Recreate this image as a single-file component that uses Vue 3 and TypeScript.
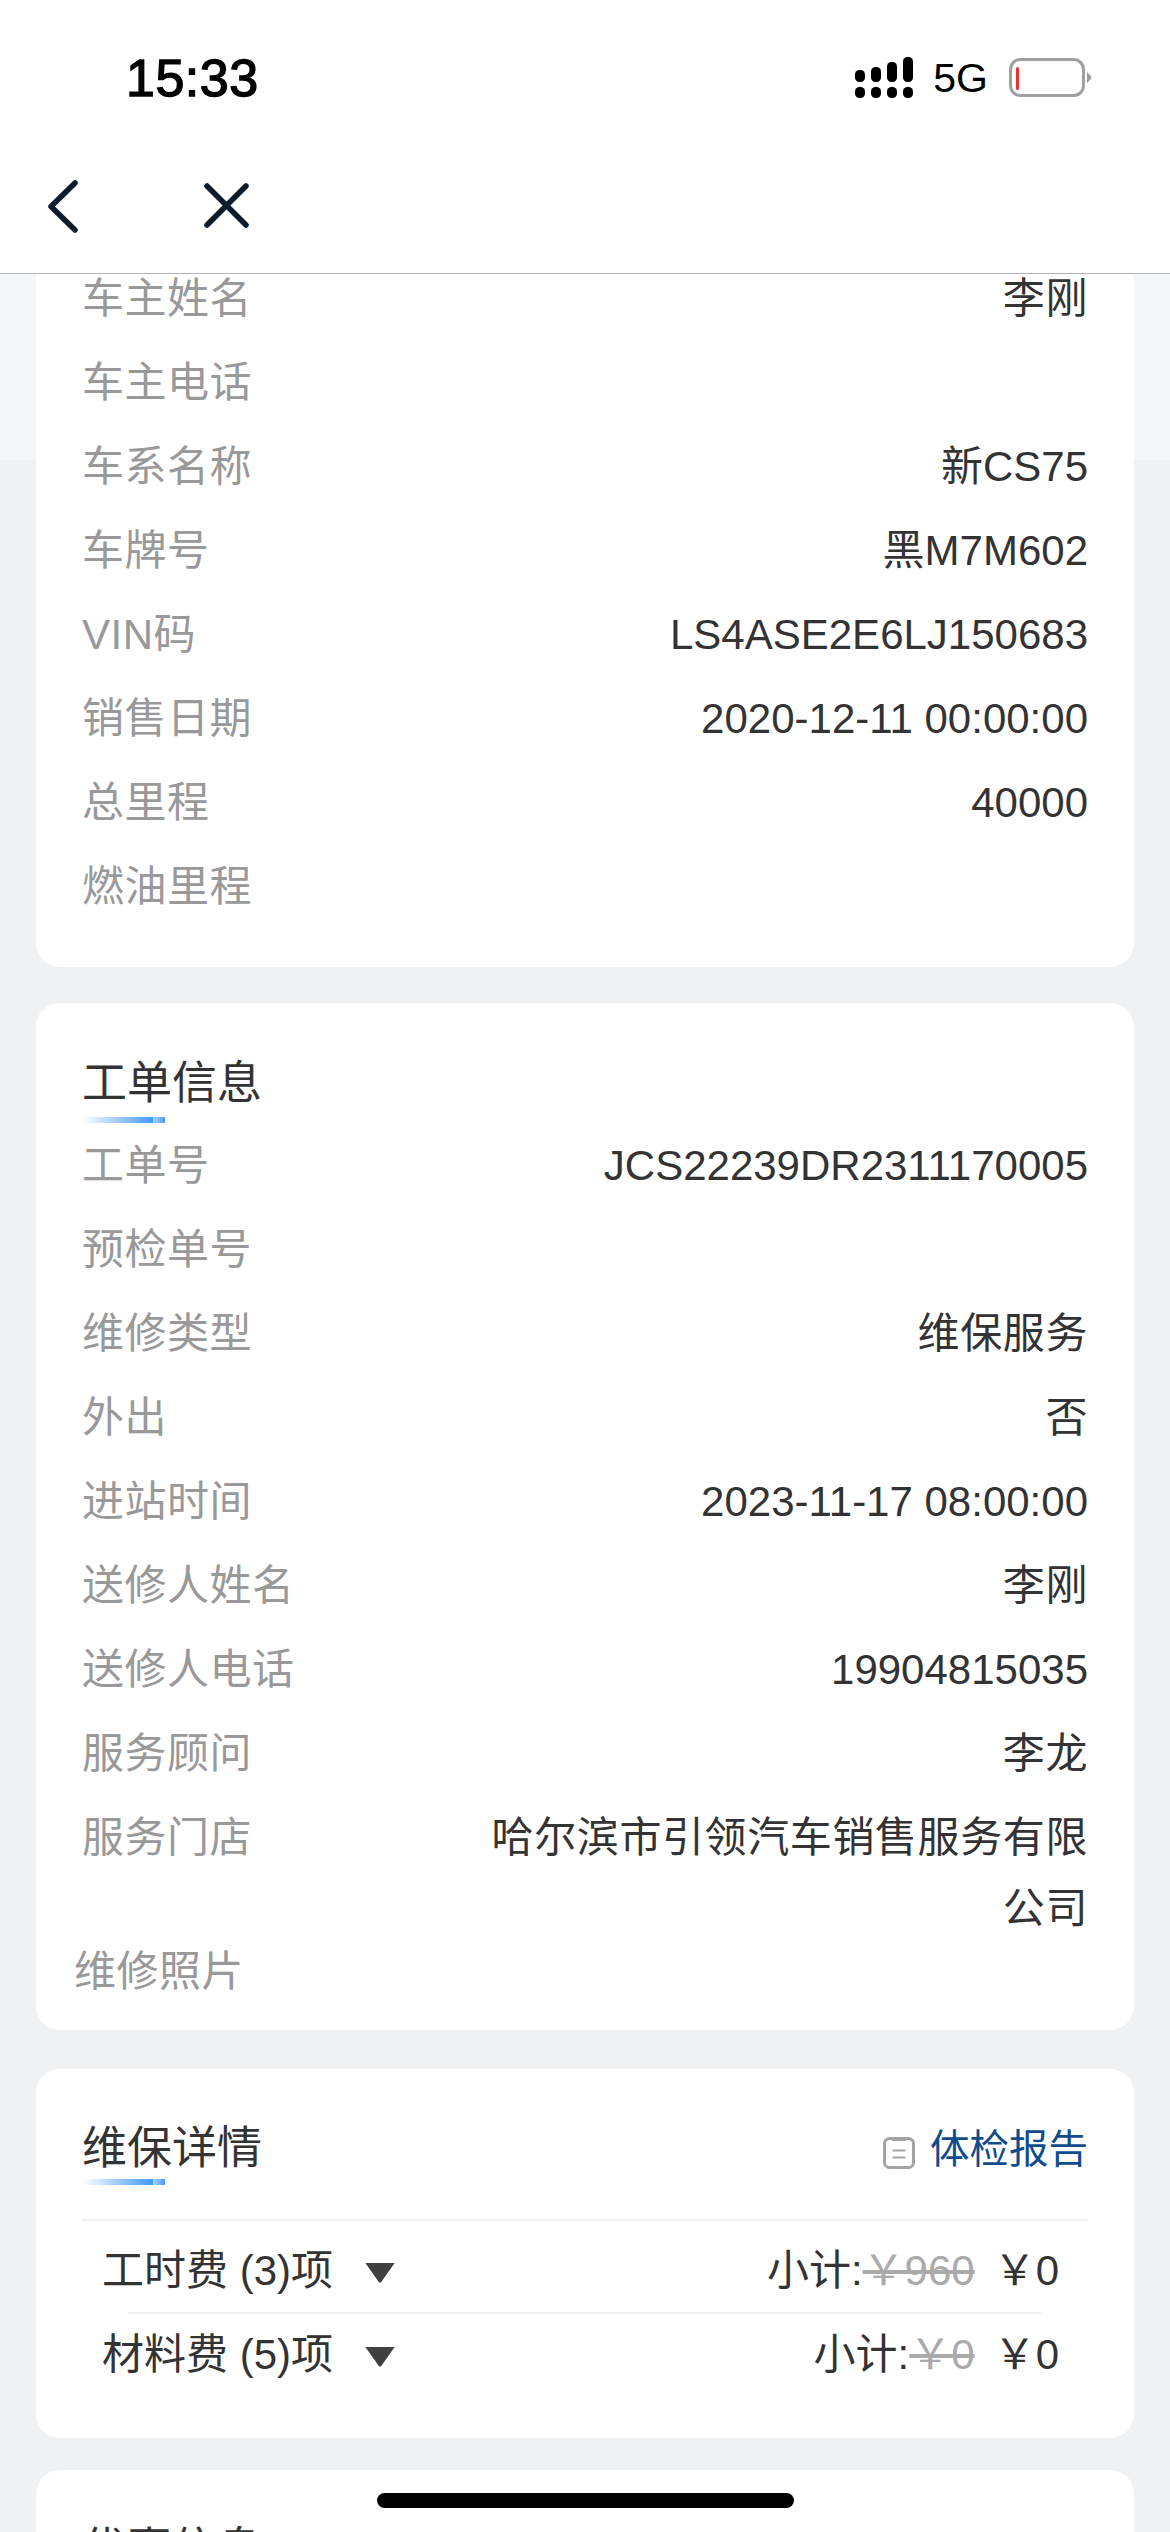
<script setup lang="ts">
interface Row { label: string; value?: string }

const ownerRows: Row[] = [
  { label: '车主姓名', value: '李刚' },
  { label: '车主电话' },
  { label: '车系名称', value: '新CS75' },
  { label: '车牌号', value: '黑M7M602' },
  { label: 'VIN码', value: 'LS4ASE2E6LJ150683' },
  { label: '销售日期', value: '2020-12-11 00:00:00' },
  { label: '总里程', value: '40000' },
  { label: '燃油里程' },
]

const orderRows: Row[] = [
  { label: '工单号', value: 'JCS22239DR2311170005' },
  { label: '预检单号' },
  { label: '维修类型', value: '维保服务' },
  { label: '外出', value: '否' },
  { label: '进站时间', value: '2023-11-17 08:00:00' },
  { label: '送修人姓名', value: '李刚' },
  { label: '送修人电话', value: '19904815035' },
  { label: '服务顾问', value: '李龙' },
  { label: '服务门店', value: '哈尔滨市引领汽车销售服务有限公司' },
]

const fees = [
  { name: '工时费 (3)项', original: '￥960', actual: '￥0' },
  { name: '材料费 (5)项', original: '￥0', actual: '￥0' },
]

const isCjk = (text?: string): boolean => !!text && !/[0-9A-Za-z]/.test(text)
</script>

<template>
  <div class="page">
    <header class="top">
      <div class="status">
        <span class="time">15:33</span>
        <div class="status-right">
          <svg class="signal" width="58" height="41" viewBox="0 0 58 41">
            <rect x="0" y="13" width="10" height="12" rx="4.5" />
            <rect x="16" y="10" width="10" height="15" rx="4.5" />
            <rect x="32" y="5" width="10" height="20" rx="4.5" />
            <rect x="48" y="0" width="10" height="25" rx="4.5" />
            <rect x="0" y="30" width="10" height="11" rx="4.5" />
            <rect x="16" y="30" width="10" height="11" rx="4.5" />
            <rect x="32" y="30" width="10" height="11" rx="4.5" />
            <rect x="48" y="30" width="10" height="11" rx="4.5" />
          </svg>
          <span class="net">5G</span>
          <svg class="battery" width="83" height="40" viewBox="0 0 83 40">
            <rect x="1.5" y="1.5" width="73" height="36" rx="10" fill="none" stroke="#a0a0a0" stroke-width="3" />
            <rect x="7" y="9" width="3" height="23" rx="1.5" fill="#f0302c" />
            <path d="M78 14 L82 18 Q82.6 19.5 82 21 L78 25 Z" fill="#a0a0a0" />
          </svg>
        </div>
      </div>
      <nav class="nav">
        <svg class="nav-icon" width="210" height="60" viewBox="0 0 210 60" fill="none" stroke="#0b1c2c" stroke-width="5.5" stroke-linecap="round" stroke-linejoin="round">
          <path d="M27 3 L3 26.5 L27 50" />
          <path d="M159 6 L198 45 M198 6 L159 45" />
        </svg>
      </nav>
    </header>

    <main class="content">
      <section class="card owner">
        <div v-for="row in ownerRows" :key="row.label" class="row">
          <span class="label">{{ row.label }}</span>
          <span class="value" :class="{ cjk: isCjk(row.value) }">{{ row.value }}</span>
        </div>
      </section>

      <section class="card order">
        <h2 class="title">工单信息</h2>
        <div v-for="row in orderRows" :key="row.label" class="row">
          <span class="label">{{ row.label }}</span>
          <span class="value" :class="{ cjk: isCjk(row.value) }">{{ row.value }}</span>
        </div>
        <div class="photos">维修照片</div>
      </section>

      <section class="card detail">
        <div class="detail-head">
          <h2 class="title">维保详情</h2>
          <div class="report">
            <svg width="34" height="34" viewBox="0 0 34 34" fill="none" stroke="#a3a3a3">
              <rect x="2.5" y="2.5" width="29" height="29" rx="5" stroke-width="3" />
              <path d="M10 3 H24" stroke-width="4" />
              <path d="M10.5 14.5 H23.5 M10.5 21.5 H23.5" stroke-width="2" />
            </svg>
            <span>体检报告</span>
          </div>
        </div>
        <div class="fees">
          <div v-for="fee in fees" :key="fee.name" class="fee">
            <div class="fee-name">
              <span>{{ fee.name }}</span>
              <i class="arrow"></i>
            </div>
            <div class="fee-sum">
              <span>小计:</span><s>{{ fee.original }}</s><span class="actual">{{ fee.actual }}</span>
            </div>
          </div>
        </div>
      </section>

      <section class="card last">
        <h2 class="title">优惠信息</h2>
      </section>
    </main>

    <div class="home"></div>
  </div>
</template>

<style scoped>
.page {
  position: relative;
  width: 1170px;
  height: 2532px;
  overflow: hidden;
  display: flex;
  flex-direction: column;
  font-family: "Liberation Sans", "Noto Sans CJK SC", sans-serif;
  font-size: 42px;
  color: #333;
  background: #fff;
}
.top {
  flex: none;
  background: #fff;
  border-bottom: 1px solid #b2b2b2;
  position: relative;
  z-index: 2;
}
.status {
  height: 140px;
  display: flex;
  align-items: center;
  justify-content: space-between;
  padding: 14px 78px 0 126px;
  box-sizing: border-box;
}
.time {
  font-size: 52px;
  font-weight: 400;
  letter-spacing: 0.5px;
  -webkit-text-stroke: 1.4px #000;
  color: #000;
  line-height: 1;
  margin-top: 1px;
}
.status-right {
  display: flex;
  align-items: center;
}
.signal { fill: #000; }
.net {
  font-size: 41px;
  color: #000;
  line-height: 1;
  margin: 3px 21px 0 20px;
}
.battery { margin-top: 2px; }
.nav {
  height: 133px;
  display: flex;
  padding: 40px 0 0 48px;
  box-sizing: border-box;
}
.nav-icon { display: block; }
.content {
  flex: 1;
  min-height: 0;
  overflow: hidden;
  padding: 0 36px;
  background: linear-gradient(#f5f6f8 186px, #f0f1f3 186px);
}
.card {
  background: #fff;
  border-radius: 24px;
  padding: 0 46px;
}
.owner {
  margin-top: -18px;
  padding-bottom: 39px;
  margin-bottom: 36px;
}
.order {
  padding-top: 59px;
  padding-bottom: 36px;
  margin-bottom: 39px;
}
.title {
  position: relative;
  margin: 0;
  font-size: 45px;
  font-weight: 400;
  line-height: 44px;
  color: #333;
}
.title::after {
  content: "";
  position: absolute;
  left: 0;
  top: 55px;
  width: 83px;
  height: 6px;
  background: linear-gradient(90deg, #fff 0, #409cff 85%, #a8d2ff 86%, #409cff 100%);
}
.order .title { margin-bottom: 5px; height: 56px; }
.row {
  display: flex;
  justify-content: space-between;
  padding: 6.5px 0;
  line-height: 71px;
}
.label {
  flex: none;
  color: #999;
  letter-spacing: 0.5px;
}
.value {
  width: 600px;
  text-align: right;
  color: #333;
  min-height: 71px;
}
.value.cjk { letter-spacing: 0.6px; }
.photos {
  margin-left: -8px;
  line-height: 44px;
  color: #999;
  letter-spacing: 0.5px;
}
.detail {
  height: 369px;
  box-sizing: border-box;
  margin-bottom: 32px;
  padding-top: 58px;
}
.detail .title::after { top: 52px; }
.detail-head {
  display: flex;
  justify-content: space-between;
  height: 92px;
  border-bottom: 2px solid #f0f1f3;
}
.report {
  display: flex;
  align-items: flex-start;
  gap: 14px;
  height: 44px;
  margin-top: 0;
  font-size: 39.5px;
  line-height: 44px;
  color: #0f4c8c;
}
.report svg { margin-top: 9px; }
.fees {
  padding: 7px 29px 0 20px;
}
.fee {
  display: flex;
  justify-content: space-between;
  align-items: center;
  height: 84px;
  box-sizing: border-box;
  padding-bottom: 7px;
  position: relative;
}
.fee + .fee::before {
  content: "";
  position: absolute;
  left: 26px;
  right: 18px;
  top: 0;
  border-top: 2px solid #f0f1f3;
}
.fee-name {
  display: flex;
  align-items: center;
  gap: 32px;
}
.arrow {
  width: 30px;
  height: 20px;
  margin-top: 12px;
  background: #404040;
  clip-path: polygon(0 0, 100% 0, 53% 100%, 47% 100%);
}
.fee-sum {
  display: flex;
  align-items: baseline;
}
.fee-sum s {
  color: #aaa;
  font-size: 42px;
}
.actual { margin-left: 19px; }
.last {
  height: 200px;
  padding-top: 58px;
}
.last .title::after { display: none; }
.home {
  position: absolute;
  left: 377px;
  top: 2493px;
  width: 417px;
  height: 15px;
  border-radius: 8px;
  background: #000;
  z-index: 3;
}
</style>
